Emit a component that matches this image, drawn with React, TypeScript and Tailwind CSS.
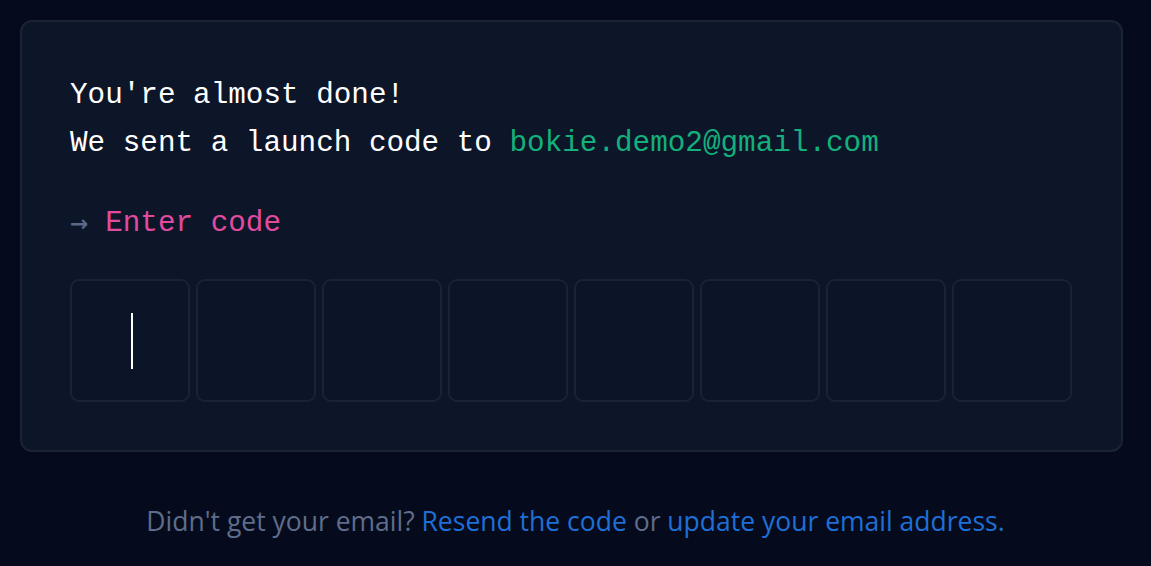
import { useState } from 'react';

const mono = "font-['Liberation_Mono','DejaVu_Sans_Mono',monospace]";

function CodeBox({ active }: { active?: boolean }) {
  return (
    <div className="flex h-[123px] w-[120px] items-center justify-center rounded-[9px] border-2 border-[#1a2234] bg-[#0c1427] pl-[3px]">
      {active && <span className="h-[56px] w-[2px] bg-white" />}
    </div>
  );
}

export default function App() {
  const [digits] = useState<string[]>(Array(8).fill(''));

  return (
    <div className="h-[566px] overflow-hidden bg-[#050b1d] pl-5 pr-[28px] pt-5">
      <div className="h-[432px] rounded-[12px] border-2 border-[#1b2336] bg-[#0d1529] px-[48px] pt-[50px]">
        <div className={`${mono} text-[29.3px] leading-[48px] text-white`}>
          <p>You're almost done!</p>
          <p>
            We sent a launch code to <span className="text-[#14b07c]">bokie.demo2@gmail.com</span>
          </p>
        </div>

        <div className={`${mono} mt-[32px] flex items-center text-[29.3px] leading-[48px]`}>
          <span className="w-[35.2px] font-['DejaVu_Sans',sans-serif] text-[22px] font-bold text-[#5a6985]">→</span>
          <span className="text-[#e04b9f]">Enter code</span>
        </div>

        <div className="mt-[31px] flex gap-[6px]">
          {digits.map((_, i) => (
            <CodeBox key={i} active={i === 0} />
          ))}
        </div>
      </div>

      <p className="mt-[51px] pl-2 text-center font-['Open_Sans',sans-serif] text-[26.5px] leading-[36px] text-[#5f6d8a]">
        Didn't get your email? <span className="text-[#1f6fd6]">Resend the code</span> or{' '}
        <span className="text-[#1f6fd6]">update your email address.</span>
      </p>
    </div>
  );
}
